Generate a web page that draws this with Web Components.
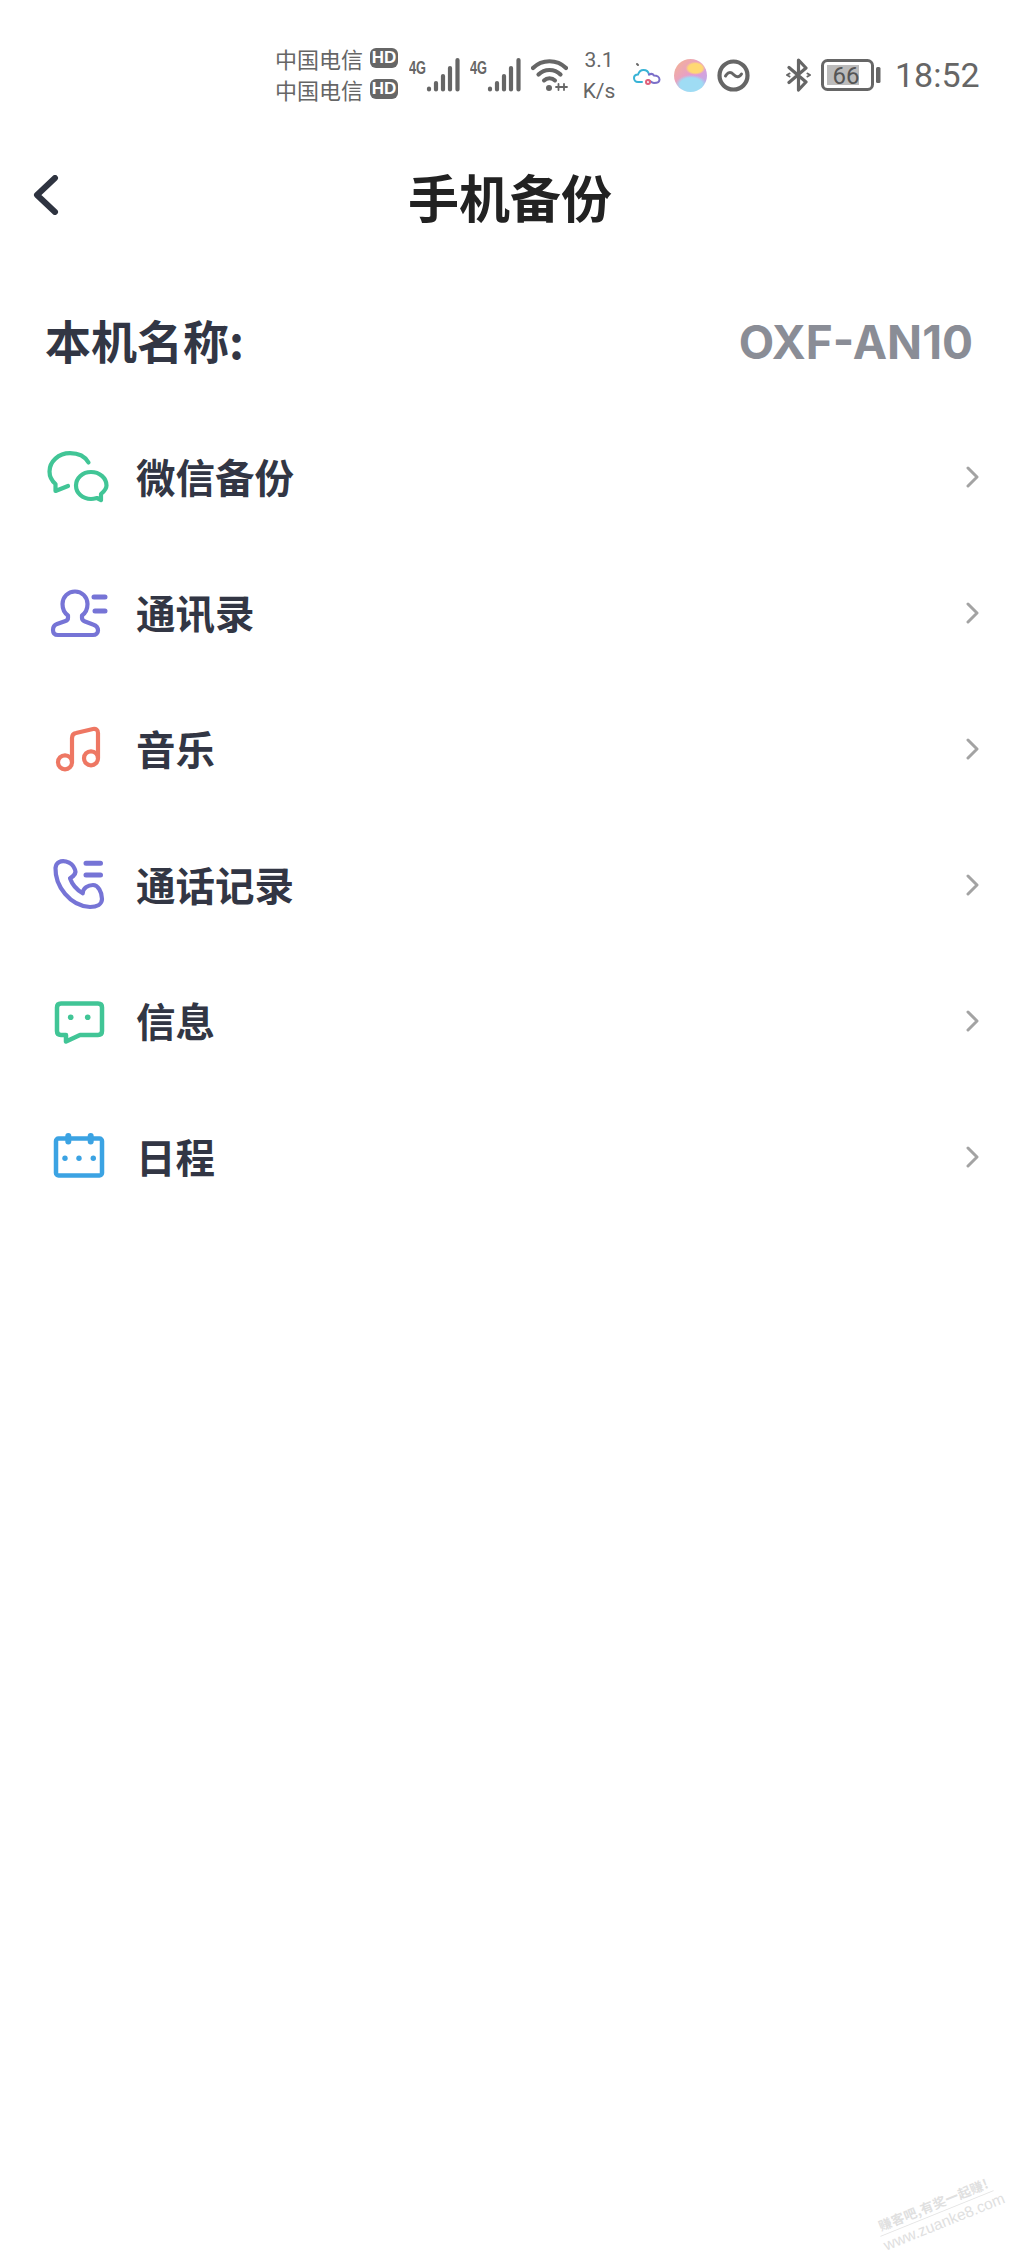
<!DOCTYPE html>
<html lang="zh">
<head>
<meta charset="utf-8">
<title>手机备份</title>
<style>
  html, body { margin: 0; background: #fff; }
  body { font-family: "Noto Sans CJK SC", "Liberation Sans", sans-serif; }
</style>
</head>
<body>
<app-page>
  <status-bar></status-bar>
  <nav-header>手机备份</nav-header>
  <device-name value="OXF-AN10">本机名称:</device-name>
  <backup-list>
    <backup-row>
      <svg slot="icon" width="72" height="72" viewBox="0 0 72 72" fill="none" stroke="#41c596" stroke-width="4.2" stroke-linecap="round" stroke-linejoin="round">
        <path d="M46.5 20.5C43 14.5 36 11.2 28 11.2C16.5 11.2 7.5 19.5 7.5 29.5C7.5 34.5 10 39 13.5 42V49L26 44"/>
        <path d="M49 30C40.5 30 34 36 34 43.5C34 51 40.5 57 49 57C51 57 53 56.5 55 56L59 58V52C62 49.5 64.5 47 64.5 43.5C64.5 36 57.5 30 49 30Z"/>
      </svg>
      微信备份
    </backup-row>
    <backup-row>
      <svg slot="icon" width="72" height="72" viewBox="0 0 72 72" fill="none" stroke="#7674d6" stroke-width="4.2" stroke-linecap="round" stroke-linejoin="round">
        <path d="M33 13.5C26 13.5 20.5 19 20.5 26C20.5 31 22.5 35 26 37.5V40C26 41.5 25 42.5 23.5 43L15 46C12 47 11 49 11 52C11 55.5 13 57 16 57H51C54 57 56 55 56 52.5C56 49.5 54 47.5 51 46.5L43 43.5C41 42.8 40 41.5 40 40V37.5C43.5 35 45.5 31 45.5 26C45.5 19 40 13.5 33 13.5Z"/>
        <path d="M52 19H63M53 33H63" stroke-width="5"/>
      </svg>
      通讯录
    </backup-row>
    <backup-row>
      <svg slot="icon" width="72" height="72" viewBox="0 0 72 72" fill="none" stroke="#ee7763" stroke-width="4.2" stroke-linecap="round" stroke-linejoin="round">
        <circle cx="23" cy="48.3" r="7"/>
        <circle cx="49" cy="44.3" r="7"/>
        <path d="M30 48V24C30 21 31.5 19.5 34 19L51 15C54 14.5 56 16 56 19V44"/>
      </svg>
      音乐
    </backup-row>
    <backup-row>
      <svg slot="icon" width="72" height="72" viewBox="0 0 72 72" fill="none" stroke="#7674d6" stroke-width="4.2" stroke-linecap="round" stroke-linejoin="round">
        <path d="M24 11.5C19 10.5 14 12 13.5 18C13 36 28 56 48 57C55 57 60 54 60 49C60 42 56 35 51 35C46 35 41 38 40.7 43.3C35 40 30 34 28 28.3C32 26 34.5 23 33 19.5C31.5 15.5 28 12.5 24 11.5Z"/>
        <path d="M44 13.3H58.5M44 25H58.5" stroke-width="5"/>
      </svg>
      通话记录
    </backup-row>
    <backup-row>
      <svg slot="icon" width="72" height="72" viewBox="0 0 72 72" fill="none" stroke="#41c596" stroke-width="4.5" stroke-linecap="round" stroke-linejoin="round">
        <path d="M19 17.5H56C58.5 17.5 60 19 60 21.5V45C60 47.5 58.5 49 56 49H38L24 55.5V49H19C16.5 49 15 47.5 15 45V21.5C15 19 16.5 17.5 19 17.5Z"/>
        <circle cx="28.7" cy="31.3" r="2.8" fill="#41c596" stroke="none"/>
        <circle cx="45.7" cy="31.3" r="2.8" fill="#41c596" stroke="none"/>
      </svg>
      信息
    </backup-row>
    <backup-row>
      <svg slot="icon" width="72" height="72" viewBox="0 0 72 72" fill="none" stroke="#3ba3e3" stroke-width="4.5" stroke-linecap="round" stroke-linejoin="round">
        <rect x="14" y="16.5" width="46" height="37" rx="2.5"/>
        <path d="M26.3 14V19.5M48.7 14V19.5" stroke-width="6"/>
        <circle cx="23" cy="36.3" r="2.7" fill="#3ba3e3" stroke="none"/>
        <circle cx="37" cy="36.3" r="2.7" fill="#3ba3e3" stroke="none"/>
        <circle cx="51.3" cy="36.3" r="2.7" fill="#3ba3e3" stroke="none"/>
      </svg>
      日程
    </backup-row>
  </backup-list>
  <water-mark></water-mark>
</app-page>

<script>
const signal = () => `
  <svg class="signal" width="52" height="36" viewBox="0 0 52 36">
    <text x="0" y="17" font-family="'Liberation Sans', sans-serif" font-weight="700" font-size="18" fill="#666" textLength="17" lengthAdjust="spacingAndGlyphs">4G</text>
    <g stroke="#666" stroke-width="4.2" stroke-linecap="round">
      <path d="M20 31.5V32.5M27 26V32.5M34 19V32.5M41 11V32.5M48.5 3V32.5"/>
    </g>
  </svg>`;

class AppPage extends HTMLElement {
  constructor() {
    super();
    this.attachShadow({ mode: "open" });
    this.shadowRoot.innerHTML = `
      <style>
        :host { display: block; position: relative; width: 1020px; height: 2267px; overflow: hidden; background: #fff; }
      </style>
      <slot></slot>`;
  }
}

class StatusBar extends HTMLElement {
  constructor() {
    super();
    this.attachShadow({ mode: "open" });
    this.shadowRoot.innerHTML = `
      <style>
        :host { display: flex; align-items: center; height: 150px; padding-left: 275px; box-sizing: border-box; color: #666; font-family: "Noto Sans CJK SC", sans-serif; }
        .carriers { display: grid; row-gap: 5px; width: 123px; margin-bottom: 3px; }
        .carrier { display: flex; align-items: center; justify-content: space-between; height: 26px; font-size: 22px; line-height: 26px; }
        .hd { width: 28px; height: 20px; border-radius: 6px; background: #666; color: #fff; font: 700 17px/20px "Liberation Sans", sans-serif; text-align: center; }
        .signal { margin-left: 11px; flex: none; }
        .signal + .signal { margin-left: 9px; }
        .wifi { margin-left: 9px; flex: none; }
        .speed { margin-left: 13px; width: 36px; display: grid; row-gap: 7px; justify-items: center; font: 400 21px/24px Roboto, sans-serif; }
        .cloud { margin-left: 16px; flex: none; }
        .sphere { margin-left: 13px; width: 33px; height: 33px; border-radius: 50%; flex: none; background: radial-gradient(ellipse 30% 20% at 65% 28%, #ffd873 0 70%, transparent 100%), radial-gradient(ellipse 48% 30% at 52% 78%, #9fdcf4 0 70%, transparent 100%), linear-gradient(135deg, #f6b58b 0%, #e49ad6 55%, #a9b7f0 100%); }
        .round { margin-left: 10px; flex: none; }
        .bt { margin-left: 36px; flex: none; }
        .battery { margin-left: 10px; flex: none; }
        .time { margin-left: 14px; font: 400 34px/40px Roboto, sans-serif; }
      </style>
      <div class="carriers">
        <div class="carrier">中国电信<span class="hd">HD</span></div>
        <div class="carrier">中国电信<span class="hd">HD</span></div>
      </div>
      ${signal()}${signal()}
      <svg class="wifi" width="37" height="36" viewBox="0 0 37 36" fill="none" stroke="#666" stroke-linecap="round">
        <path d="M2 11C11 2 26 2 35 11" stroke-width="4.2"/>
        <path d="M7.5 17.5C13.5 11.5 23.5 11.5 29.5 17.5" stroke-width="4.2"/>
        <path d="M13 23.5C16 20.5 21 20.5 24 23.5" stroke-width="4"/>
        <circle cx="18" cy="31" r="3" fill="#666" stroke="none"/>
        <path d="M27.5 27V33M33 27V33M25 30H36" stroke-width="1.8"/>
      </svg>
      <div class="speed"><span>3.1</span><span>K/s</span></div>
      <svg class="cloud" width="28" height="26" viewBox="0 0 28 26" fill="none" stroke-width="2" stroke-linecap="round">
        <path d="M4 2L5 3" stroke="#666"/>
        <path d="M9 20H5C2.5 20 1 18 1 16C1 14 2.5 12.5 5 12.5C6 9.5 8 8 10.5 8C13.5 8 15.5 10 16 12.5" stroke="#38b3d6"/>
        <path d="M16 12.5C18 11.5 20 12 21 13.5C24 13.5 26.5 15 26.5 17.5C26.5 20 24 21 21 21C18 21 17 18 15 18" stroke="#7b6fc9"/>
        <circle cx="15" cy="20" r="2" stroke="#e0607a"/>
      </svg>
      <div class="sphere"></div>
      <svg class="round" width="33" height="33" viewBox="0 0 33 33" fill="none" stroke="#666" stroke-linecap="round">
        <circle cx="16.5" cy="16.5" r="14" stroke-width="4.2"/>
        <path d="M8.5 17C11 12.5 14 13 16.5 15.5C19 18 22 19 24.5 15" stroke-width="3"/>
      </svg>
      <svg class="bt" width="25" height="34" viewBox="0 0 25 34" fill="none" stroke="#666" stroke-width="3.2" stroke-linecap="round" stroke-linejoin="round">
        <path d="M3 9.5L20 24L12.5 32V2L20 10L3 24.5"/>
        <path d="M21.5 15.5L24 17L21.5 18.5" stroke-width="2"/>
        <path d="M3.5 15.5L1 17L3.5 18.5" stroke-width="2"/>
      </svg>
      <svg class="battery" width="60" height="32" viewBox="0 0 60 32">
        <rect x="1.5" y="1.5" width="50" height="29" rx="5" fill="none" stroke="#666" stroke-width="3"/>
        <rect x="6" y="6" width="32" height="20" fill="#bbb"/>
        <rect x="55" y="8" width="4.5" height="16" rx="1.5" fill="#666"/>
        <text x="25" y="24.5" text-anchor="middle" font-family="Roboto, sans-serif" font-size="24" fill="#555">66</text>
      </svg>
      <span class="time">18:52</span>`;
  }
}

class NavHeader extends HTMLElement {
  constructor() {
    super();
    this.attachShadow({ mode: "open" });
    this.shadowRoot.innerHTML = `
      <style>
        :host { display: flex; align-items: center; justify-content: center; position: relative; height: 92px; font-size: 51px; font-weight: 700; color: #222; }
        svg { position: absolute; left: 32px; top: 25px; }
      </style>
      <svg width="28" height="40" viewBox="0 0 28 40" fill="none" stroke="#2e3340" stroke-width="6" stroke-linecap="round" stroke-linejoin="round">
        <path d="M23 3L5 20L23 37"/>
      </svg>
      <slot></slot>`;
  }
}

class DeviceName extends HTMLElement {
  constructor() {
    super();
    this.attachShadow({ mode: "open" });
    this.shadowRoot.innerHTML = `
      <style>
        :host { display: flex; align-items: center; justify-content: space-between; height: 112px; margin-top: 44px; padding: 0 47px 0 45px; font-size: 46px; font-weight: 700; color: #323644; }
        .label { padding-bottom: 6px; }
        .value { font: 700 46px/1 Inter, "Liberation Sans", sans-serif; color: #8a8d96; }
      </style>
      <span class="label"><slot></slot></span>
      <span class="value"></span>`;
    this.shadowRoot.querySelector(".value").textContent = this.getAttribute("value");
  }
}

class BackupList extends HTMLElement {
  constructor() {
    super();
    this.attachShadow({ mode: "open" });
    this.shadowRoot.innerHTML = `
      <style>
        :host { display: block; padding-top: 12px; }
      </style>
      <slot></slot>`;
  }
}

class BackupRow extends HTMLElement {
  constructor() {
    super();
    this.attachShadow({ mode: "open" });
    this.shadowRoot.innerHTML = `
      <style>
        :host { display: flex; align-items: center; height: 136px; padding: 0 40px 0 42px; font-size: 39.5px; font-weight: 700; color: #323644; }
        .icon { display: flex; width: 72px; height: 72px; margin-right: 22px; }
        .label { flex: 1; padding-bottom: 6px; }
        svg { margin-bottom: 3px; }
      </style>
      <span class="icon"><slot name="icon"></slot></span>
      <span class="label"><slot></slot></span>
      <svg width="14" height="24" viewBox="0 0 14 24" fill="none" stroke="#a3a3a3" stroke-width="3" stroke-linecap="round" stroke-linejoin="round">
        <path d="M2 3L11 12L2 21"/>
      </svg>`;
  }
}

class WaterMark extends HTMLElement {
  constructor() {
    super();
    this.attachShadow({ mode: "open" });
    this.shadowRoot.innerHTML = `
      <style>
        :host { position: absolute; left: 876px; top: 2194px; width: 122px; transform: rotate(-22deg); color: #e0e0e0; text-align: center; }
        .cn { font-size: 13px; line-height: 19px; letter-spacing: .4px; border-bottom: 1px solid #e4e4e4; white-space: nowrap; font-weight: 700; }
        .url { font: 400 15.5px/19px "Liberation Sans", sans-serif; white-space: nowrap; }
      </style>
      <div class="cn">赚客吧,有奖一起赚!</div>
      <div class="url">www.zuanke8.com</div>`;
  }
}

customElements.define("app-page", AppPage);
customElements.define("status-bar", StatusBar);
customElements.define("nav-header", NavHeader);
customElements.define("device-name", DeviceName);
customElements.define("backup-list", BackupList);
customElements.define("backup-row", BackupRow);
customElements.define("water-mark", WaterMark);
</script>
</body>
</html>
